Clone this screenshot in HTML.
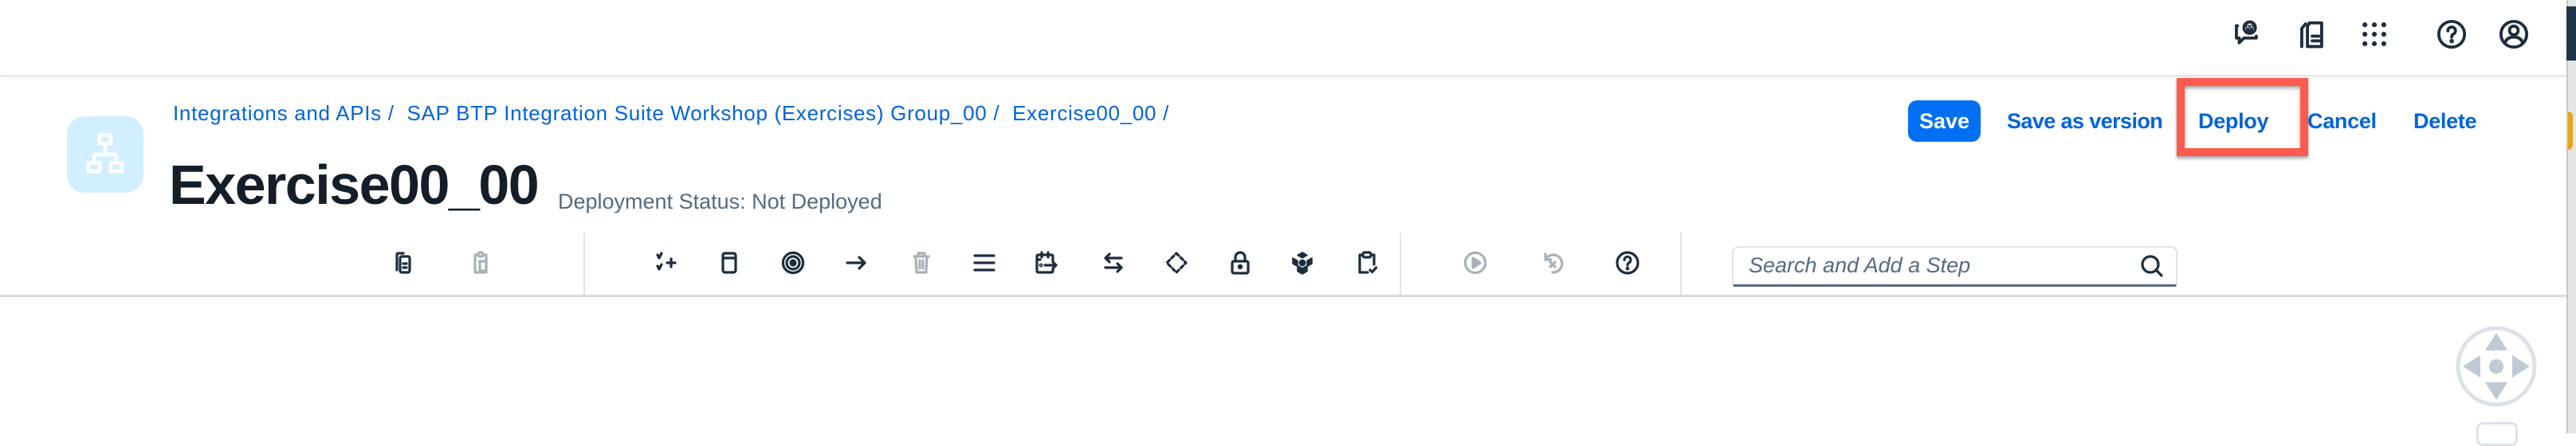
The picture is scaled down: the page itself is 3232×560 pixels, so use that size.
<!DOCTYPE html>
<html><head><meta charset="utf-8"><style>
*{margin:0;padding:0;box-sizing:border-box}
body{width:3232px;height:544px;overflow:hidden;background:#fff;font-family:"Liberation Sans",Arial,sans-serif;position:relative}
.abs{position:absolute}
.ic{position:absolute;width:32px;height:32px;top:314px}
.ic svg,.sh svg{width:100%;height:100%;fill:none;stroke:#1d2d3e;stroke-width:1.6;stroke-linecap:round;stroke-linejoin:round}
.dis svg{stroke:#a9b0b8}
.sh{position:absolute;width:38px;height:38px;top:24px}
.btn{position:absolute;top:126px;height:52px;line-height:52px;font-size:27px;font-weight:bold;color:#0064d9;letter-spacing:-0.3px}
</style></head><body>
<div class="abs" style="left:0;top:0;width:3220px;height:96px;background:#fff;border-bottom:2px solid #e4e6e8;box-shadow:0 2px 4px rgba(0,0,0,.06)"></div>
<div class="sh" style="left:2800px"><svg viewBox="0 0 16 16"><path d="M3 3.5H2.5v6.5h1.5v2.5l2.5-2.5h6.5v-1"/><circle cx="9.5" cy="4.5" r="3"/><circle cx="8.5" cy="4" r=".3"/><circle cx="10.5" cy="4" r=".3"/><path d="M8.5 5.5q1 1 2 0"/></svg></div>
<div class="sh" style="left:2882px"><svg viewBox="0 0 16 16"><path d="M4.5 2.5l-2 2.5v9.5"/><path d="M6.5 2H13v12.5H5.5V4z"/><path d="M8 9h3.5M8 11.5h3.5"/></svg></div>
<div class="sh" style="left:2960px"><svg viewBox="0 0 16 16" style="fill:#1d2d3e;stroke:none"><circle cx="3" cy="3" r="1.3"/><circle cx="8" cy="3" r="1.3"/><circle cx="13" cy="3" r="1.3"/><circle cx="3" cy="8" r="1.3"/><circle cx="8" cy="8" r="1.3"/><circle cx="13" cy="8" r="1.3"/><circle cx="3" cy="13" r="1.3"/><circle cx="8" cy="13" r="1.3"/><circle cx="13" cy="13" r="1.3"/></svg></div>
<div class="sh" style="left:3057px"><svg viewBox="0 0 16 16"><circle cx="8" cy="8" r="6.8"/><path d="M6 6.2a2 2 0 1 1 2.8 1.8c-.6.3-.8.7-.8 1.5"/><circle cx="8" cy="11.6" r=".4" fill="#1d2d3e"/></svg></div>
<div class="sh" style="left:3135px"><svg viewBox="0 0 16 16"><circle cx="8" cy="8" r="6.8"/><circle cx="8" cy="6" r="2.3"/><path d="M3.3 12.8q.8-3.3 4.7-3.3t4.7 3.3"/></svg></div>
<div class="abs" style="left:3220px;top:0;width:12px;height:544px;background:#e6e6e6;border-left:2px solid #c8c8c8"></div>
<div class="abs" style="left:3220px;top:8px;width:12px;height:68px;background:#223548"></div>
<div class="abs" style="left:3222px;top:140px;width:6px;height:48px;background:#e8a317;border-radius:0 6px 6px 0"></div>
<div class="abs" style="left:84px;top:146px;width:96px;height:96px;background:#d1efff;border-radius:22px"></div>
<svg class="abs" style="left:104px;top:166px;width:56px;height:56px" viewBox="0 0 16 16" fill="none" stroke="#fff" stroke-width="1.3"><rect x="6" y="1" width="4" height="3"/><path d="M8 4v4M4 8h8M4 8v3M12 8v3"/><rect x="2" y="11" width="4" height="3"/><rect x="10" y="11" width="4" height="3"/></svg>
<div class="abs" style="left:217px;top:127px;font-size:26px;color:#0064d9;white-space:nowrap;letter-spacing:0.7px">Integrations and APIs /&nbsp; SAP BTP Integration Suite Workshop (Exercises) Group_00 /&nbsp; Exercise00_00 /</div>
<div class="abs" style="left:212px;top:192px;font-size:70px;font-weight:bold;color:#131e29;letter-spacing:-1.5px;white-space:nowrap">Exercise00_00</div>
<div class="abs" style="left:700px;top:238px;font-size:27px;color:#556b82;white-space:nowrap">Deployment Status: Not Deployed</div>
<div class="abs" style="left:2394px;top:126px;width:91px;height:52px;background:#0070f2;border-radius:11px;color:#fff;font-size:27px;font-weight:bold;text-align:center;line-height:52px">Save</div>
<div class="btn" style="left:2518px;letter-spacing:-0.6px">Save as version</div>
<div class="btn" style="left:2758px">Deploy</div>
<div class="btn" style="left:2895px">Cancel</div>
<div class="btn" style="left:3028px">Delete</div>
<div class="abs" style="left:2731px;top:98px;width:165px;height:98px;border:10px solid #ff5a4e;box-shadow:0 3px 4px rgba(0,0,0,.35), inset 0 3px 4px rgba(0,0,0,.35)"></div>
<div class="abs" style="left:732px;top:292px;width:2px;height:79px;background:#e4e4e4"></div>
<div class="abs" style="left:1756px;top:292px;width:2px;height:79px;background:#e4e4e4"></div>
<div class="abs" style="left:2108px;top:292px;width:2px;height:79px;background:#e4e4e4"></div>
<div class="ic" style="left:491px"><svg viewBox="0 0 16 16"><path d="M3.5 12.5V3q0-1 1-1h3"/><rect x="5.5" y="4" width="6" height="10" rx="1"/><path d="M7.5 8.5h2M7.5 11h2"/></svg></div>
<div class="ic dis" style="left:588px"><svg viewBox="0 0 16 16"><path d="M6 3H4v11h7V3H9"/><rect x="6" y="1.5" width="3" height="2.5" rx="1"/><rect x="7" y="7" width="4" height="6"/></svg></div>
<div class="ic" style="left:819px"><svg viewBox="0 0 16 16"><path d="M3 3l1 2 1.5-3M3 10l1 2 1.5-3M9 8h5M11.5 5.5v5"/></svg></div>
<div class="ic" style="left:899px"><svg viewBox="0 0 16 16"><rect x="4" y="2" width="8" height="12" rx="1.3"/><path d="M4 5h8"/></svg></div>
<div class="ic" style="left:979px"><svg viewBox="0 0 16 16"><circle cx="8" cy="8" r="6.3"/><circle cx="8" cy="8" r="4"/><circle cx="8" cy="8" r="1.5" fill="#1d2d3e"/></svg></div>
<div class="ic" style="left:1058px"><svg viewBox="0 0 16 16"><path d="M2.5 8h11M10 4.5L13.5 8 10 11.5"/></svg></div>
<div class="ic dis" style="left:1140px"><svg viewBox="0 0 16 16"><path d="M3.5 4h9M6 4V2h4v2M4.5 4l.5 10h6l.5-10M7 6.5v5M9 6.5v5"/></svg></div>
<div class="ic" style="left:1219px"><svg viewBox="0 0 16 16"><path d="M2 3.5h12M2 8h12M2 12.5h12"/></svg></div>
<div class="ic" style="left:1297px"><svg viewBox="0 0 16 16"><path d="M12 7V4q0-1-1-1H3Q2 3 2 4v9q0 1 1 1h8q1 0 1-1v-1M5 1.5v3M9 1.5v3M2 6h2M7 9.5h7M12 7.5l2 2-2 2"/><circle cx="4.5" cy="9.5" r=".4"/></svg></div>
<div class="ic" style="left:1381px"><svg viewBox="0 0 16 16"><path d="M13 5H3M5.5 2.5L3 5l2.5 2.5M3 11h10M10.5 8.5L13 11l-2.5 2.5"/></svg></div>
<div class="ic" style="left:1460px"><svg viewBox="0 0 16 16" stroke-dasharray="2 1.7"><path d="M8 2l6 6-6 6-6-6z"/></svg></div>
<div class="ic" style="left:1540px"><svg viewBox="0 0 16 16"><rect x="3" y="7" width="10" height="7.5" rx="1"/><path d="M5 7V4.5a3 3 0 0 1 6 0V7"/><circle cx="8" cy="10.5" r=".8" fill="#1d2d3e"/></svg></div>
<div class="ic" style="left:1618px"><svg viewBox="0 0 16 16" style="fill:#1d2d3e;stroke:#1d2d3e;stroke-width:.8"><path d="M8 1.5l3 1.7-3 1.7-3-1.7zM2 5l3 1.7v3.5L2 8.5zM14 5l-3 1.7v3.5l3-1.7zM8 11.5l3-1.7v3.5L8 15zM8 11.5L5 9.8v3.5L8 15z"/><circle cx="8" cy="8" r="1.8"/></svg></div>
<div class="ic" style="left:1699px"><svg viewBox="0 0 16 16"><path d="M5.5 3H3.5v11h5M10.5 3h2v6"/><rect x="5.5" y="1.5" width="5" height="3" rx="1"/><path d="M10 12.5l1.3 1.3 2.5-2.8"/></svg></div>
<div class="ic dis" style="left:1835px"><svg viewBox="0 0 16 16"><circle cx="8" cy="8" r="6.3"/><path d="M6.5 5v6l4.5-3z" fill="#a9b0b8"/></svg></div>
<div class="ic dis" style="left:1932px"><svg viewBox="0 0 16 16"><path d="M3.5 6A5.5 5.5 0 1 1 8 14M3.5 2.5V6H7M6.5 7.5l3 3M9.5 7.5l-3 3"/></svg></div>
<div class="ic" style="left:2026px"><svg viewBox="0 0 16 16"><circle cx="8" cy="8" r="6.5"/><path d="M6 6.2a2 2 0 1 1 2.8 1.8c-.6.3-.8.7-.8 1.5"/><circle cx="8" cy="11.6" r=".4" fill="#1d2d3e"/></svg></div>
<div class="abs" style="left:2173px;top:309px;width:559px;height:51px;border:2px solid #dfe3e8;border-bottom:3px solid #556b82;border-radius:8px 8px 4px 4px;background:#fff"></div>
<div class="abs" style="left:2194px;top:318px;font-size:27px;font-style:italic;color:#556b82;white-space:nowrap">Search and Add a Step</div>
<svg class="abs" style="left:2684px;top:318px;width:32px;height:32px" viewBox="0 0 16 16" fill="none" stroke="#1d2d3e" stroke-width="1.6" stroke-linecap="round"><circle cx="7" cy="7" r="5"/><path d="M10.5 10.5l3.5 3.5"/></svg>
<div class="abs" style="left:0;top:370px;width:3220px;height:3px;background:#dcdcdc;box-shadow:0 3px 6px rgba(0,0,0,.05)"></div>
<svg class="abs" style="left:3080px;top:408px;width:104px;height:104px" viewBox="0 0 104 104"><circle cx="52" cy="52" r="48" fill="none" stroke="#dde2ea" stroke-width="5"/><g fill="#bfcad6"><path d="M52 10l14 22H38z"/><path d="M52 94l14-22H38z"/><path d="M10 52l22-14v28z"/><path d="M94 52l-22-14v28z"/><circle cx="52" cy="52" r="9"/></g></svg>
<div class="abs" style="left:3107px;top:530px;width:52px;height:30px;border:3px solid #dde2ea;border-radius:8px"></div>
</body></html>
